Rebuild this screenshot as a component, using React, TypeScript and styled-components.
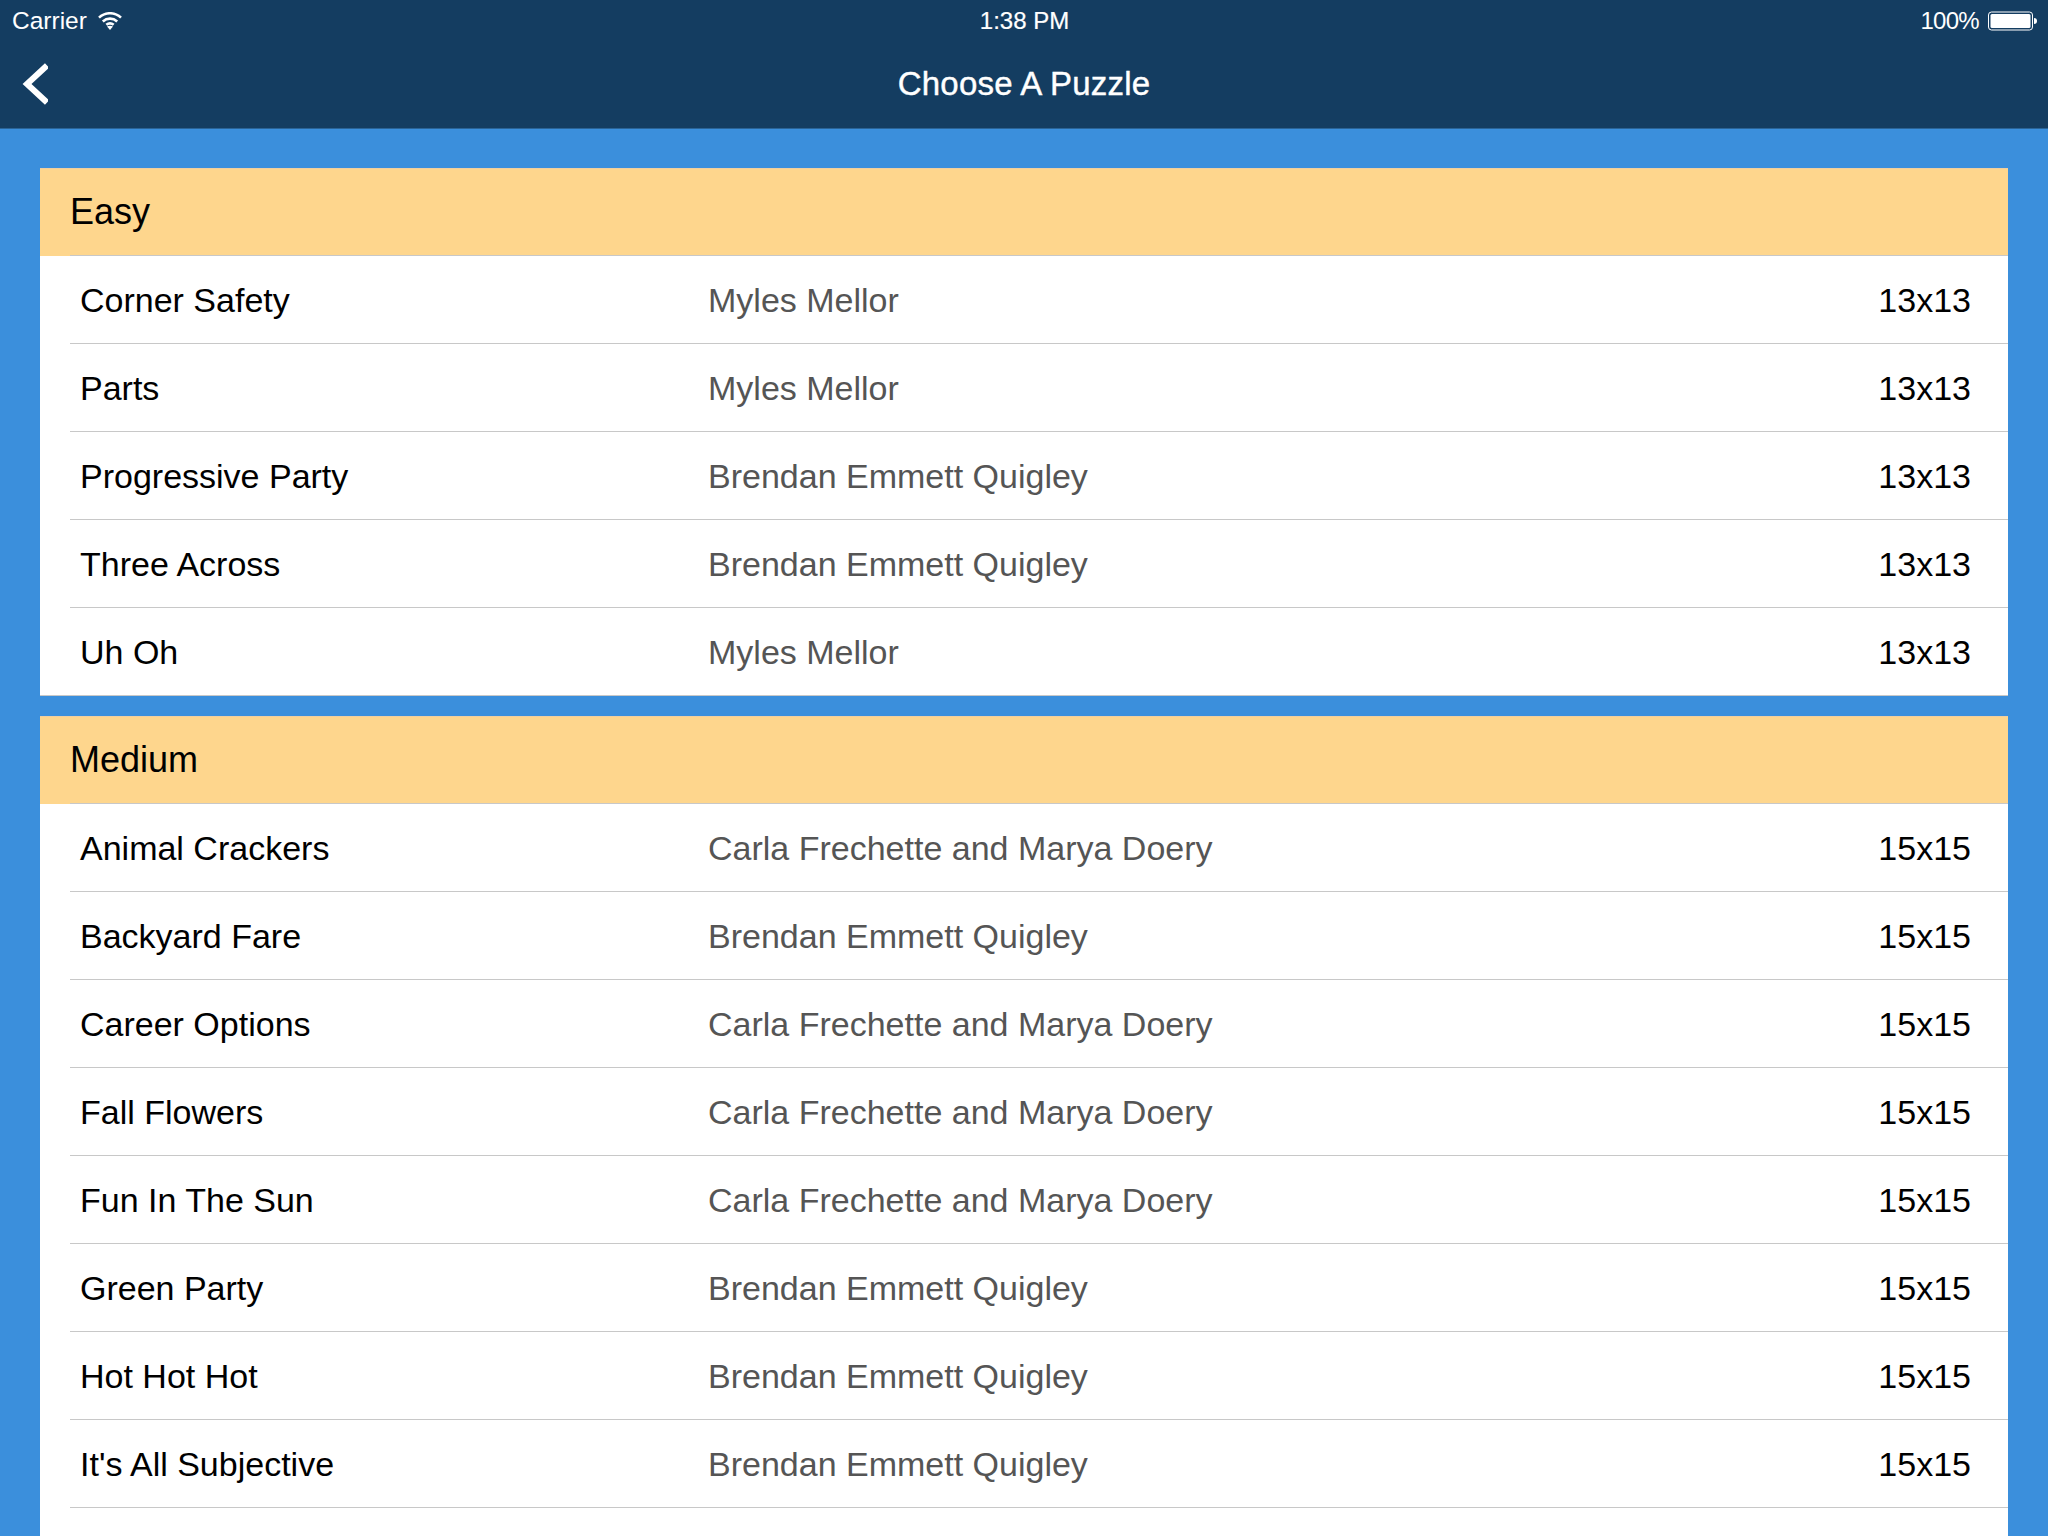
import React from "react";
import styled, { createGlobalStyle } from "styled-components";

const Global = createGlobalStyle`
  html, body { margin: 0; padding: 0; background: #3b8fdc; }
  body { font-family: "Liberation Sans", Arial, sans-serif; }
`;

const Screen = styled.div`
  width: 2048px;
  height: 1536px;
  overflow: hidden;
  background: #3b8fdc;
  display: flex;
  flex-direction: column;
`;

const TopBar = styled.header`
  flex: none;
  height: 129px;
  box-sizing: border-box;
  background: #143d61;
  border-bottom: 1px solid #2a6497;
  color: #fff;
  display: flex;
  flex-direction: column;
`;

const StatusBar = styled.div`
  height: 40px;
  box-sizing: border-box;
  display: grid;
  grid-template-columns: 1fr auto 1fr;
  align-items: center;
  padding: 2px 11px 0 12px;
  font-size: 24.5px;
`;

const StatusLeft = styled.div`
  display: flex;
  align-items: center;
  gap: 11px;
`;

const StatusRight = styled.div`
  display: flex;
  align-items: center;
  justify-content: flex-end;
  gap: 9px;
`;

const Percent = styled.span`
  font-size: 24px;
  letter-spacing: -0.7px;
`;

const Clock = styled.div`
  font-size: 24px;
  -webkit-text-stroke: 0.2px #fff;
`;

const NavBar = styled.div`
  position: relative;
  flex: 1;
  display: flex;
  align-items: center;
  justify-content: center;
  padding-bottom: 1px;
`;

const NavTitle = styled.h1`
  margin: 0;
  font-size: 33px;
  font-weight: 400;
  letter-spacing: 0.2px;
  -webkit-text-stroke: 0.4px #fff;
`;

const BackButton = styled.svg`
  position: absolute;
  left: 22px;
  top: 23px;
`;

const Content = styled.main`
  flex: 1;
  padding: 39px 40px 0;
  display: flex;
  flex-direction: column;
  gap: 20px;
`;

const Section = styled.section`
  background: #fff;
  border-bottom: 1px solid #c8c8c8;
`;

const SectionHeader = styled.div`
  height: 88px;
  margin-bottom: -1px;
  box-sizing: border-box;
  background: #fed68d;
  border-top: 1px solid #f0cfa0;
  padding: 0 0 2px 30px;
  display: flex;
  align-items: center;
  font-size: 36px;
  color: #000;
`;

const Row = styled.div`
  height: 88px;
  box-sizing: border-box;
  margin-left: 30px;
  padding: 2px 37px 0 10px;
  border-top: 1px solid #c8c8c8;
  display: grid;
  grid-template-columns: 628px 1fr auto;
  align-items: center;
  font-size: 34px;
`;

const Title = styled.div`
  color: #000;
`;

const Author = styled.div`
  color: #555;
`;

const Size = styled.div`
  color: #000;
`;

const sections = [
  {
    name: "Easy",
    size: "13x13",
    rows: [
      ["Corner Safety", "Myles Mellor"],
      ["Parts", "Myles Mellor"],
      ["Progressive Party", "Brendan Emmett Quigley"],
      ["Three Across", "Brendan Emmett Quigley"],
      ["Uh Oh", "Myles Mellor"],
    ],
  },
  {
    name: "Medium",
    size: "15x15",
    rows: [
      ["Animal Crackers", "Carla Frechette and Marya Doery"],
      ["Backyard Fare", "Brendan Emmett Quigley"],
      ["Career Options", "Carla Frechette and Marya Doery"],
      ["Fall Flowers", "Carla Frechette and Marya Doery"],
      ["Fun In The Sun", "Carla Frechette and Marya Doery"],
      ["Green Party", "Brendan Emmett Quigley"],
      ["Hot Hot Hot", "Brendan Emmett Quigley"],
      ["It's All Subjective", "Brendan Emmett Quigley"],
      ["", ""],
    ],
  },
];

const Wifi = () => (
  <svg width="24" height="18" viewBox="0 0 24 18" fill="none" stroke="#fff" strokeWidth="2.6">
    <path d="M1 5.6C7.3 -.2 16.7 -.2 23 5.6" />
    <path d="M4.8 9.4c4.2-3.7 10.2-3.700 14.4 0" />
    <path d="M8.3 12.8c2.2-1.8 5.2-1.8 7.4 0" />
    <path d="M12 18l-3-3.4c1.8-1.2 4.2-1.2 6 0z" fill="#fff" stroke="none" />
  </svg>
);

const Battery = () => (
  <svg width="49" height="20" viewBox="0 0 49 20">
    <rect x="0.5" y="1" width="44" height="18" rx="3" fill="none" stroke="#fff" strokeWidth="1" />
    <rect x="2.5" y="3" width="40" height="14" rx="1.5" fill="#fff" />
    <path d="M46 7c2 0 3 1 3 3s-1 3-3 3z" fill="#fff" />
  </svg>
);

export default function App() {
  return (
    <Screen>
      <Global />
      <TopBar>
        <StatusBar>
          <StatusLeft>
            <span>Carrier</span>
            <Wifi />
          </StatusLeft>
          <Clock>1:38 PM</Clock>
          <StatusRight>
            <Percent>100%</Percent>
            <Battery />
          </StatusRight>
        </StatusBar>
        <NavBar>
          <BackButton width="26" height="42" viewBox="0 0 26 42" fill="none" stroke="#fff" strokeWidth="6">
            <path d="M25 2.500L5 21l20 18.500" />
          </BackButton>
          <NavTitle>Choose A Puzzle</NavTitle>
        </NavBar>
      </TopBar>
      <Content>
        {sections.map((s) => (
          <Section key={s.name}>
            <SectionHeader>{s.name}</SectionHeader>
            {s.rows.map(([title, author], i) => (
              <Row key={i}>
                <Title>{title}</Title>
                <Author>{author}</Author>
                <Size>{title ? s.size : ""}</Size>
              </Row>
            ))}
          </Section>
        ))}
      </Content>
    </Screen>
  );
}
